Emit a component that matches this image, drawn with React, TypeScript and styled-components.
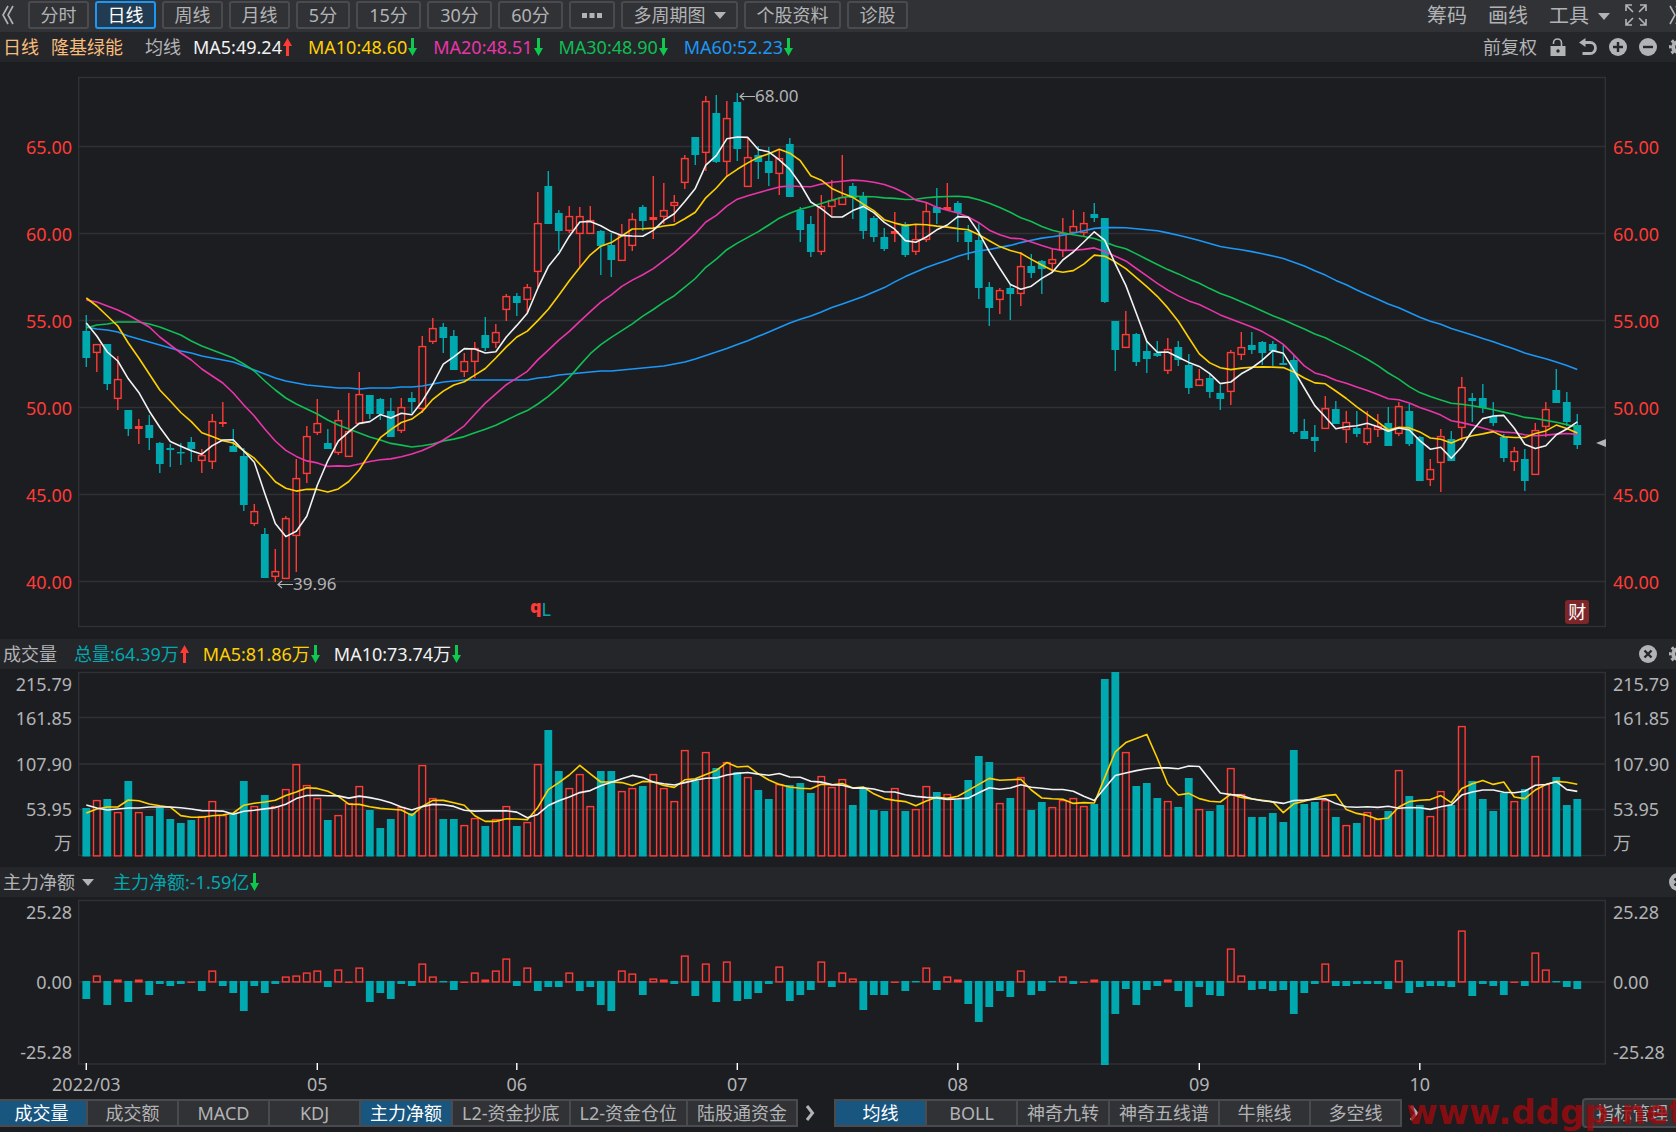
import React from "react";
import styled, { createGlobalStyle, css } from "styled-components";

const color = {
  bg: "#1c1d21",
  bar: "#25262a",
  toolbar: "#313236",
  line: "#303136",
  edge: "#4a4b4f",
  text: "#b2b3b5",
  bright: "#ffffff",
  red: "#ff3b36",
  teal: "#00a8b0",
  green: "#0fc94f",
  yellow: "#ffd000",
  pink: "#e935a9",
  jade: "#10be54",
  blue: "#1b97f5",
  orange: "#f8bc7c",
};

const GlobalStyle = createGlobalStyle`
  * { box-sizing: border-box; }
  body {
    margin: 0;
    overflow: hidden;
    background: ${color.bg};
    color: ${color.text};
    font-family: "Noto Sans", "Noto Sans CJK SC", sans-serif;
    font-size: 18px;
    line-height: 24px;
  }
  button, select {
    margin: 0;
    padding: 0;
    border: 0;
    background: none;
    color: inherit;
    font: inherit;
    white-space: nowrap;
    cursor: pointer;
  }
  svg { display: block; flex: none; }
`;

/* ---------- data ---------- */

// One row per trading day: [rising, high, body top, body bottom, low] on the price canvas.
type Candle = [number, number, number, number, number];
const candles: Candle[] = [
  [0, 315, 331, 358, 367], [1, 344, 344, 353, 372], [0, 344, 344, 384, 390], [1, 356, 379, 399, 410],
  [0, 410, 410, 429, 436], [1, 419, 426, 429, 444], [0, 415, 425, 438, 450], [0, 442, 443, 464, 473],
  [0, 444, 448, 450, 467], [0, 443, 452, 453, 465], [0, 437, 442, 449, 462], [1, 449, 455, 461, 473],
  [1, 414, 421, 462, 469], [1, 402, 422, 424, 427], [0, 429, 446, 452, 452], [0, 448, 456, 505, 511],
  [1, 504, 511, 524, 526], [0, 528, 534, 578, 578], [1, 549, 571, 577, 582], [1, 516, 518, 579, 579],
  [1, 459, 478, 536, 572], [1, 426, 436, 474, 483], [1, 399, 423, 433, 435], [0, 429, 443, 449, 449],
  [1, 410, 420, 453, 455], [1, 393, 431, 457, 457], [1, 372, 394, 424, 424], [0, 395, 395, 414, 419],
  [0, 398, 399, 414, 420], [0, 398, 411, 437, 437], [1, 398, 407, 431, 433], [0, 392, 398, 402, 413],
  [1, 336, 346, 409, 413], [1, 318, 328, 342, 344], [0, 323, 327, 338, 353], [0, 330, 336, 370, 370],
  [1, 353, 361, 372, 377], [1, 342, 348, 362, 378], [0, 317, 335, 348, 351], [1, 324, 332, 343, 348],
  [1, 294, 296, 310, 321], [0, 293, 296, 303, 316], [1, 284, 287, 300, 313], [1, 192, 223, 272, 287],
  [0, 171, 186, 224, 224], [0, 210, 213, 231, 251], [1, 206, 216, 231, 233], [1, 207, 216, 234, 267],
  [1, 206, 220, 234, 234], [0, 230, 231, 246, 275], [0, 233, 245, 260, 277], [1, 224, 235, 261, 261],
  [1, 213, 219, 246, 251], [0, 205, 207, 221, 231], [1, 176, 217, 220, 239], [1, 183, 210, 217, 224],
  [1, 195, 202, 206, 222], [1, 155, 158, 183, 189], [0, 137, 137, 155, 165], [1, 96, 101, 153, 171],
  [0, 95, 113, 162, 163], [1, 101, 118, 162, 177], [0, 93, 102, 149, 161], [1, 137, 157, 187, 187],
  [0, 146, 155, 162, 179], [0, 147, 161, 173, 186], [1, 150, 158, 174, 195], [0, 138, 144, 197, 197],
  [0, 207, 210, 230, 242], [0, 216, 224, 252, 257], [1, 195, 206, 252, 255], [1, 180, 200, 207, 217],
  [1, 155, 197, 205, 205], [0, 183, 186, 198, 219], [0, 192, 197, 231, 239], [0, 216, 218, 237, 242],
  [0, 228, 237, 249, 251], [1, 212, 231, 234, 242], [0, 222, 224, 255, 257], [1, 225, 239, 252, 255],
  [1, 203, 211, 240, 242], [0, 188, 207, 213, 224], [1, 183, 207, 210, 211], [0, 201, 203, 213, 242],
  [0, 225, 231, 242, 260], [0, 223, 240, 288, 299], [0, 282, 287, 308, 326], [1, 288, 290, 300, 314],
  [0, 285, 288, 294, 320], [1, 252, 266, 294, 306], [0, 254, 266, 273, 278], [0, 260, 261, 269, 294],
  [1, 249, 259, 264, 272], [1, 218, 233, 251, 257], [1, 210, 226, 233, 234], [1, 212, 223, 233, 237],
  [0, 203, 214, 218, 222], [0, 218, 218, 302, 303], [0, 321, 321, 350, 371], [1, 311, 334, 348, 348],
  [0, 333, 334, 362, 366], [0, 341, 351, 359, 373], [0, 341, 353, 356, 357], [1, 338, 349, 371, 374],
  [0, 341, 347, 360, 366], [0, 354, 365, 388, 394], [1, 369, 379, 386, 386], [0, 374, 378, 392, 398],
  [0, 385, 393, 399, 410], [1, 350, 352, 392, 405], [1, 332, 347, 355, 360], [0, 332, 345, 350, 354],
  [0, 341, 342, 353, 365], [0, 341, 344, 351, 366], [0, 345, 363, 365, 365], [0, 355, 360, 432, 434],
  [0, 419, 431, 439, 439], [0, 425, 437, 441, 452], [1, 396, 408, 429, 429], [0, 401, 409, 424, 424],
  [1, 411, 422, 430, 443], [0, 411, 428, 434, 437], [1, 411, 428, 443, 445], [1, 414, 426, 430, 437],
  [0, 407, 423, 446, 446], [1, 402, 406, 434, 436], [0, 404, 411, 444, 446], [0, 436, 437, 481, 481],
  [1, 459, 469, 480, 486], [1, 429, 436, 463, 492], [0, 431, 439, 461, 461], [1, 377, 387, 428, 441],
  [0, 393, 398, 401, 422], [0, 384, 398, 408, 413], [0, 402, 416, 423, 426], [0, 434, 437, 458, 462],
  [1, 447, 451, 462, 471], [0, 449, 459, 481, 491], [1, 423, 430, 475, 475], [1, 402, 409, 427, 437],
  [0, 369, 390, 403, 403], [0, 392, 402, 422, 426], [0, 414, 425, 445, 449],
];

// Tops of the volume bars.
const volumes = [
  808, 800, 799, 812, 781, 812, 816, 808, 819, 823, 820, 816, 801, 815, 813, 781, 806, 795, 806, 789, 764, 785,
  798, 820, 815, 803, 786, 810, 828, 819, 807, 813, 765, 798, 819, 819, 825, 818, 826, 819, 806, 826, 822, 764,
  730, 771, 788, 774, 806, 771, 771, 791, 788, 786, 774, 788, 801, 750, 781, 752, 768, 762, 772, 777, 790, 799,
  784, 785, 783, 793, 776, 787, 779, 805, 788, 810, 811, 788, 811, 809, 786, 792, 794, 800, 780, 756, 762, 803,
  798, 777, 810, 802, 807, 800, 798, 806, 804, 679, 672, 752, 786, 783, 798, 801, 807, 778, 809, 811, 805, 768,
  794, 817, 817, 813, 822, 750, 804, 802, 800, 817, 825, 823, 812, 819, 811, 770, 796, 805, 816, 791, 805, 726,
  781, 799, 811, 793, 801, 789, 756, 784, 777, 805, 799,
];

// Net inflow of large orders, signed bar lengths.
const flows = [
  -18, 7, -24, 3, -21, 3, -14, -3, -5, -3, 1, -10, 12, -5, -12, -30, -5, -12, -3, 6, 7, 10, 12, -6, 13, 1, 15,
  -21, -12, -18, -3, -5, 19, 6, -1, -9, 1, 10, 3, 12, 24, -5, 15, -10, -6, -6, 10, -10, -6, -24, -30, 12, 9,
  -14, 4, 3, -3, 27, -15, 19, -21, 21, -20, -18, -12, -3, 16, -20, -14, -9, 21, -6, 10, 4, -29, -14, -14, 1,
  -10, -1, 15, -9, 6, 3, -23, -41, -26, -10, -16, 12, -14, -10, -1, 6, -3, 1, 3, -84, -33, -8, -24, -9, -5, 3,
  -10, -26, -6, -14, -15, 34, 7, -9, -8, -10, -9, -33, -12, -3, 19, -5, -5, -3, -3, -3, -8, 22, -12, -6, -5,
  -5, -6, 52, -15, -3, -5, -14, 1, -5, 30, 13, -1, -6, -8,
];

// Averages for the first days, whose windows start before the visible range.
const lead = {
  ma5: [323, 336, 352, 361],
  ma10: [298, 306, 316, 326, 343, 358, 374, 390, 401],
  ma20: [300, 302, 306, 310, 315, 321, 327, 337, 345, 353, 360, 369, 376, 383, 393, 405, 416, 429, 441],
  ma30: [
    328, 325, 324, 322, 322, 322, 324, 327, 331, 335, 341, 346, 350, 354, 358, 364, 371, 381, 390, 398, 404, 409,
    414, 420, 425, 429, 433, 437, 440,
  ],
  ma60: [
    327, 329, 330, 332, 336, 339, 342, 345, 348, 351, 353, 356, 358, 360, 362, 366, 370, 374, 378, 381, 383, 385,
    386, 387, 388, 388, 389, 388, 388, 388, 387, 387, 386, 384, 382, 381, 380, 380, 380, 380, 380, 380, 380, 378,
    377, 375, 374, 373, 372, 371, 371, 370, 369, 368, 367, 366, 364, 362, 359,
  ],
  vol5: [813, 809, 807, 807],
  vol10: [805, 808, 810, 809, 808, 808, 807, 807, 807],
};

const LEFT = 78;
const WIDTH = 1528;
const STEP = 10.5;
const xOf = (i: number) => 86.3 + i * STEP;
const percent = (x: number) => `${((x - LEFT) / WIDTH) * 100}%`;

const closes = candles.map(([up, , top, bottom]) => (up ? top : bottom));

function average(values: number[], span: number, head: number[]) {
  return values.map((_, i) => {
    if (i < span - 1) return head[i];
    let sum = 0;
    for (let k = i - span + 1; k <= i; k++) sum += values[k];
    return sum / span;
  });
}

const priceLines = [
  { stroke: color.blue, points: average(closes, 60, lead.ma60) },
  { stroke: color.jade, points: average(closes, 30, lead.ma30) },
  { stroke: color.pink, points: average(closes, 20, lead.ma20) },
  { stroke: color.yellow, points: average(closes, 10, lead.ma10) },
  { stroke: "#f2f2f2", points: average(closes, 5, lead.ma5) },
];
const volumeLines = [
  { stroke: color.yellow, points: average(volumes, 5, lead.vol5) },
  { stroke: "#f2f2f2", points: average(volumes, 10, lead.vol10) },
];

const months = [
  { label: "2022/03", day: 0 },
  { label: "05", day: 22 },
  { label: "06", day: 41 },
  { label: "07", day: 62 },
  { label: "08", day: 83 },
  { label: "09", day: 106 },
  { label: "10", day: 127 },
];

/* ---------- layout ---------- */

const Page = styled.div`
  display: flex;
  flex-direction: column;
  min-height: 100vh;
  overflow: hidden;
`;

const Toolbar = styled.header`
  display: flex;
  align-items: center;
  height: 32px;
  padding-bottom: 2px;
  background: ${color.toolbar};
`;

const Periods = styled.nav`
  display: flex;
  gap: 6px;
`;

const CollapseButton = styled.button`
  width: 28px;
  padding-left: 2px;
`;

const PeriodButton = styled.button<{ $active?: boolean; $width: number }>`
  display: flex;
  align-items: center;
  justify-content: center;
  gap: 8px;
  width: ${(p) => p.$width}px;
  height: 28px;
  border: 2px solid ${color.edge};
  border-radius: 3px;
  ${(p) =>
    p.$active &&
    css`
      border-color: ${color.blue};
      background: #213c52;
      color: ${color.bright};
    `}
`;

const Tools = styled.div`
  display: flex;
  align-items: center;
  gap: 15px;
  margin-left: auto;
  margin-right: -11px;
`;

const ToolMenu = styled.div`
  display: flex;
  gap: 21px;
`;

const ToolIcons = styled.div`
  display: flex;
  align-items: center;
  gap: 22px;
`;

const ToolButton = styled.button`
  display: flex;
  align-items: center;
  gap: 9px;
  height: 30px;
  padding-top: 2px;
  font-size: 20px;
`;

const InfoBar = styled.div`
  display: flex;
  align-items: center;
  height: 30px;
  padding-left: 3px;
  background: ${color.bar};
`;

const Legend = styled.div<{ $gap: number }>`
  display: flex;
  align-items: center;
  gap: ${(p) => p.$gap}px;
`;

const Label = styled.span<{ $tone?: string; $gap?: number }>`
  display: flex;
  align-items: center;
  gap: 1px;
  margin-right: ${(p) => p.$gap ?? 0}px;
  color: ${(p) => p.$tone ?? color.text};
  white-space: nowrap;
`;

const IconRow = styled.div`
  display: flex;
  align-items: center;
  gap: 12px;
  margin-left: auto;
  margin-right: -11px;
`;

const Picker = styled.label`
  display: flex;
  align-items: center;
  gap: 7px;
  margin-right: 19px;

  select {
    appearance: none;
    outline: 0;
  }
  option {
    background: ${color.bar};
  }
`;

const Panel = styled.section`
  display: grid;
  grid-template-columns: 78px minmax(0, 1fr) 70px;
`;

const Axis = styled.div<{ $rows: string; $top?: number; $side: "left" | "right"; $tone?: string }>`
  display: grid;
  grid-template-rows: ${(p) => p.$rows};
  align-content: start;
  align-items: center;
  justify-items: ${(p) => (p.$side === "left" ? "end" : "start")};
  padding: ${(p) => p.$top ?? 0}px ${(p) => (p.$side === "left" ? "6px" : "0")} 0
    ${(p) => (p.$side === "left" ? "0" : "7px")};
  color: ${(p) => p.$tone ?? color.text};
`;

const Plot = styled.div`
  position: relative;
`;

const Canvas = styled.svg<{ $height: number }>`
  width: 100%;
  height: ${(p) => p.$height}px;
`;

const Note = styled.span`
  position: absolute;
  display: flex;
  align-items: center;
  font-size: 17px;
  line-height: 20px;
`;

const NewsMark = styled.span`
  position: absolute;
  top: 534px;
  display: flex;
  font-size: 18px;
  font-weight: 700;
  line-height: 20px;

  b {
    color: ${color.red};
  }
  i {
    padding-top: 3px;
    color: ${color.teal};
    font-style: normal;
    font-weight: 400;
  }
`;

const ReportBadge = styled.button`
  position: absolute;
  top: 538px;
  width: 24px;
  height: 24px;
  border-radius: 3px;
  background: #7e2529;
  color: ${color.bright};
  line-height: 24px;
  transform: translateX(-50%);
`;

const DateAxis = styled.div`
  position: relative;
  height: 29px;
  margin: 0 70px 0 78px;
`;

const DateLabel = styled.time`
  position: absolute;
  top: 2px;
  transform: translateX(-50%);
`;

const Footer = styled.footer`
  position: relative;
  display: flex;
  align-items: center;
  height: 28px;
`;

const TabGroup = styled.nav<{ $bleed?: boolean }>`
  display: flex;
  flex: none;
  height: 28px;
  margin-left: ${(p) => (p.$bleed ? "-5px" : "0")};
  border: 2px solid ${color.edge};
`;

const Tab = styled.button<{ $active?: boolean }>`
  min-width: 91px;
  padding: 0 9px;
  border-right: 2px solid ${color.edge};
  background: ${(p) => (p.$active ? "#18557f" : color.toolbar)};
  color: ${(p) => (p.$active ? color.bright : color.text)};

  &:last-child {
    min-width: 89px;
    border-right: 0;
  }
`;

const MoreButton = styled.button`
  flex: none;
  width: 36px;
  padding-left: 7px;
`;

const ManageButton = styled.button`
  flex: none;
  height: 30px;
  margin-left: auto;
  margin-right: -6px;
  padding: 0 12px;
  border: 2px solid ${color.edge};
  border-radius: 4px;
  background: ${color.toolbar};
`;

const Watermark = styled.span`
  position: absolute;
  right: -9px;
  top: -6px;
  color: rgba(155, 10, 14, 0.82);
  font-family: "DejaVu Sans", sans-serif;
  font-size: 34px;
  font-weight: 700;
  line-height: 38px;
  pointer-events: none;
`;

/* ---------- icons ---------- */

const Caret = () => (
  <svg width="12" height="7" viewBox="0 0 12 7" fill={color.text}>
    <path d="M0 0H12L6 7Z" />
  </svg>
);

const Trend = ({ up }: { up?: boolean }) => (
  <svg width="9" height="18" viewBox="0 0 9 18" fill={up ? color.red : color.green}>
    <path d={up ? "M4.5 0L9 8H6V18H3V8H0Z" : "M4.5 18L9 10H6V0H3V10H0Z"} />
  </svg>
);

const Chevrons = ({ flip }: { flip?: boolean }) => (
  <svg width="18" height="20" viewBox="0 0 18 20" fill="none" stroke={color.text} strokeWidth="1.6">
    <path d={flip ? "M1 1L6 10L1 19M7 1L12 10L7 19" : "M6 1L1 10L6 19M11 1L6 10L11 19"} />
  </svg>
);

const More = () => (
  <svg width="10" height="16" viewBox="0 0 10 16" fill="none" stroke={color.text} strokeWidth="3">
    <path d="M2 1L7.500 8L2 15" />
  </svg>
);

const Expand = () => (
  <svg width="22" height="22" viewBox="0 0 22 22" fill="none" stroke={color.text} strokeWidth="1.6">
    <path d="M1 7V1H7M1 1L8 8M15 1H21V7M21 1L14 8M21 15V21H15M21 21L14 14M7 21H1V15M1 21L8 14" />
  </svg>
);

const Lock = () => (
  <svg width="18" height="18" viewBox="0 0 18 18">
    <path d="M12.500 9V5a4 4 0 0 0-8 0v1" fill="none" stroke={color.text} strokeWidth="1.6" />
    <rect x="1.500" y="8" width="15" height="10" fill={color.text} />
    <circle cx="9" cy="13" r="1.700" fill={color.bar} />
  </svg>
);

const Undo = () => (
  <svg width="18" height="18" viewBox="0 0 18 18">
    <path d="M5 4.500H11a5.500 5.500 0 0 1 0 11H3.500" fill="none" stroke={color.text} strokeWidth="2.800" />
    <path d="M0 4.500L6.500 0V9Z" fill={color.text} />
  </svg>
);

const Disc = ({ mark }: { mark: string }) => (
  <svg width="18" height="18" viewBox="0 0 18 18">
    <circle cx="9" cy="9" r="9" fill={color.text} />
    <path d={mark} stroke={color.bar} strokeWidth="2.400" />
  </svg>
);

const Gear = () => (
  <svg width="18" height="18" viewBox="0 0 18 18" fill="none" stroke={color.text}>
    <circle cx="9" cy="9" r="4.800" strokeWidth="4" />
    <circle cx="9" cy="9" r="7.600" strokeWidth="2.800" strokeDasharray="3 2.970" strokeDashoffset="1.500" />
  </svg>
);

const BackArrow = () => (
  <svg width="16" height="9" viewBox="0 0 16 9" fill="none" stroke={color.text} strokeWidth="1.200">
    <path d="M16 4.500H1M5 1L1 4.500L5 8" />
  </svg>
);

const CROSS = "M5.5 5.5L12.5 12.5M12.5 5.5L5.5 12.5";

/* ---------- charts ---------- */

const Curves = ({ lines }: { lines: { stroke: string; points: number[] }[] }) => (
  <g fill="none" strokeWidth="1.600" strokeLinejoin="round">
    {lines.map((line, n) => (
      <polyline
        key={n}
        stroke={line.stroke}
        points={line.points.map((y, i) => `${xOf(i)},${y.toFixed(1)}`).join(" ")}
      />
    ))}
  </g>
);

const Bar = ({ x, top, bottom, up }: { x: number; top: number; bottom: number; up: boolean }) => {
  const height = Math.max(bottom - top, 1.4);
  return up && height > 3 ? (
    <rect x={x - 3.3} y={top + 0.6} width={6.6} height={height - 1.2} fill="none" stroke={color.red} strokeWidth="1.400" />
  ) : (
    <rect x={x - 3.9} y={top} width={7.8} height={height} fill={up ? color.red : color.teal} />
  );
};

const Frame = ({ top, bottom, grid }: { top: number; bottom: number; grid: number[] }) => (
  <g fill="none" stroke={color.line} strokeWidth="1.400">
    <rect x={LEFT + 0.7} y={top} width={WIDTH - 1.4} height={bottom - top} />
    {grid.map((y) => (
      <path key={y} d={`M${LEFT} ${y}H${LEFT + WIDTH}`} />
    ))}
  </g>
);

const PriceChart = () => (
  <Canvas $height={577} viewBox="78 62 1528 577" preserveAspectRatio="none" role="img" aria-label="隆基绿能 日线">
    <Frame top={77.5} bottom={626.5} grid={[146.5, 233.5, 320.5, 407.5, 494.5, 581.5]} />
    {candles.map(([up, high, top, bottom, low], i) => {
      const x = xOf(i);
      return (
        <g key={i}>
          <path
            d={`M${x} ${high}V${top}M${x} ${bottom}V${low}`}
            stroke={up ? color.red : color.teal}
            strokeWidth="1.400"
          />
          <Bar x={x} top={top} bottom={bottom} up={up === 1} />
        </g>
      );
    })}
    <Curves lines={priceLines} />
    <path d="M1596 443L1606 439V447Z" fill={color.text} />
  </Canvas>
);

const VolumeChart = () => (
  <Canvas $height={198} viewBox="78 669 1528 198" preserveAspectRatio="none" role="img" aria-label="成交量">
    <Frame top={672.5} bottom={855.5} grid={[717.5, 764, 809.5]} />
    {volumes.map((top, i) => (
      <Bar key={i} x={xOf(i)} top={top} bottom={856.5} up={candles[i][0] === 1} />
    ))}
    <Curves lines={volumeLines} />
  </Canvas>
);

const FlowChart = () => (
  <Canvas $height={173} viewBox="78 897 1528 173" preserveAspectRatio="none" role="img" aria-label="主力净额">
    <Frame top={900.5} bottom={1064} grid={[982]} />
    {flows.map((v, i) => (
      <Bar key={i} x={xOf(i)} top={v > 0 ? 982.5 - v : 981} bottom={v > 0 ? 982.5 : 981 - v} up={v > 0} />
    ))}
    {months.map((m) => (
      <path key={m.label} d={`M${xOf(m.day)} 1063V1070`} stroke={color.bright} strokeWidth="1.400" />
    ))}
  </Canvas>
);

const AxisLabels = ({ items, ...rest }: { items: string[] } & React.ComponentProps<typeof Axis>) => (
  <Axis {...rest}>
    {items.map((t) => (
      <span key={t}>{t}</span>
    ))}
  </Axis>
);

/* ---------- page ---------- */

const periods = [
  { label: "分时", width: 61 },
  { label: "日线", width: 61, active: true },
  { label: "周线", width: 61 },
  { label: "月线", width: 61 },
  { label: "5分", width: 54 },
  { label: "15分", width: 65 },
  { label: "30分", width: 65 },
  { label: "60分", width: 65 },
];

const subTabs = ["成交量", "成交额", "MACD", "KDJ", "主力净额", "L2-资金抄底", "L2-资金仓位", "陆股通资金"];
const mainTabs = ["均线", "BOLL", "神奇九转", "神奇五线谱", "牛熊线", "多空线"];
const activeTabs = ["成交量", "主力净额", "均线"];

const prices = ["65.00", "60.00", "55.00", "50.00", "45.00", "40.00"];
const volumeTicks = ["215.79", "161.85", "107.90", "53.95", "万"];
const flowTicks = ["25.28", "0.00", "-25.28"];
const priceRows = "repeat(6, 87px)";
const volumeRows = "30px 38px 54px 36px 32px";
const flowRows = "30px 110px 30px";

export default function App() {
  return (
    <Page>
      <GlobalStyle />
      <Toolbar>
        <CollapseButton aria-label="收起">
          <Chevrons />
        </CollapseButton>
        <Periods>
          {periods.map((p) => (
            <PeriodButton key={p.label} $width={p.width} $active={p.active}>
              {p.label}
            </PeriodButton>
          ))}
          <PeriodButton $width={46} aria-label="更多周期">
            <svg width="20" height="5" viewBox="0 0 20 5" fill={color.text}>
              <path d="M0 0H5V5H0ZM7.500 0H12.500V5H7.500ZM15 0H20V5H15Z" />
            </svg>
          </PeriodButton>
          <PeriodButton $width={117}>
            多周期图
            <Caret />
          </PeriodButton>
          <PeriodButton $width={97}>个股资料</PeriodButton>
          <PeriodButton $width={61}>诊股</PeriodButton>
        </Periods>
        <Tools>
          <ToolMenu>
            <ToolButton>筹码</ToolButton>
            <ToolButton>画线</ToolButton>
            <ToolButton>
              工具
              <Caret />
            </ToolButton>
          </ToolMenu>
          <ToolIcons>
            <button aria-label="全屏">
              <Expand />
            </button>
            <button aria-label="展开">
              <Chevrons flip />
            </button>
          </ToolIcons>
        </Tools>
      </Toolbar>

      <InfoBar>
        <Label $tone={color.orange} $gap={12}>日线</Label>
        <Label $tone={color.orange} $gap={22}>隆基绿能</Label>
        <Label $gap={12}>均线</Label>
        <Legend $gap={16}>
          <Label $tone="#f2f2f2">MA5:49.24<Trend up /></Label>
          <Label $tone={color.yellow}>MA10:48.60<Trend /></Label>
          <Label $tone={color.pink}>MA20:48.51<Trend /></Label>
          <Label $tone={color.jade}>MA30:48.90<Trend /></Label>
          <Label $tone={color.blue}>MA60:52.23<Trend /></Label>
        </Legend>
        <IconRow>
          <button>前复权</button>
          <button aria-label="锁定"><Lock /></button>
          <button aria-label="撤销"><Undo /></button>
          <button aria-label="放大"><Disc mark="M9 4V14M4 9H14" /></button>
          <button aria-label="缩小"><Disc mark="M4 9H14" /></button>
          <button aria-label="设置"><Gear /></button>
        </IconRow>
      </InfoBar>

      <Panel>
        <AxisLabels $side="left" $rows={priceRows} $top={41} $tone={color.red} items={prices} />
        <Plot>
          <PriceChart />
          <Note style={{ left: percent(739), top: 24 }}>
            <BackArrow />
            68.00
          </Note>
          <Note style={{ left: percent(277), top: 512 }}>
            <BackArrow />
            39.96
          </Note>
          <NewsMark style={{ left: percent(530) }}>
            <b>q</b>
            <i>L</i>
          </NewsMark>
          <ReportBadge style={{ left: percent(xOf(142)) }}>财</ReportBadge>
        </Plot>
        <AxisLabels $side="right" $rows={priceRows} $top={41} $tone={color.red} items={prices} />
      </Panel>

      <InfoBar>
        <Label $gap={17}>成交量</Label>
        <Legend $gap={14}>
          <Label $tone={color.teal}>总量:64.39万<Trend up /></Label>
          <Label $tone={color.yellow}>MA5:81.86万<Trend /></Label>
          <Label $tone="#f2f2f2">MA10:73.74万<Trend /></Label>
        </Legend>
        <IconRow>
          <button aria-label="关闭成交量"><Disc mark={CROSS} /></button>
          <button aria-label="设置成交量"><Gear /></button>
        </IconRow>
      </InfoBar>

      <Panel>
        <AxisLabels $side="left" $rows={volumeRows} items={volumeTicks} />
        <VolumeChart />
        <AxisLabels $side="right" $rows={volumeRows} items={volumeTicks} />
      </Panel>

      <InfoBar>
        <Picker>
          <select aria-label="指标" defaultValue="主力净额">
            <option>主力净额</option>
            <option>成交额</option>
            <option>MACD</option>
          </select>
          <Caret />
        </Picker>
        <Label $tone={color.teal}>主力净额:-1.59亿<Trend /></Label>
        <IconRow>
          <button aria-label="关闭主力净额"><Disc mark={CROSS} /></button>
        </IconRow>
      </InfoBar>

      <Panel>
        <AxisLabels $side="left" $rows={flowRows} items={flowTicks} />
        <FlowChart />
        <AxisLabels $side="right" $rows={flowRows} items={flowTicks} />
      </Panel>

      <DateAxis>
        {months.map((m) => (
          <DateLabel key={m.label} style={{ left: percent(xOf(m.day)) }}>
            {m.label}
          </DateLabel>
        ))}
      </DateAxis>

      <Footer>
        <TabGroup $bleed>
          {subTabs.map((t) => (
            <Tab key={t} $active={activeTabs.includes(t)}>{t}</Tab>
          ))}
        </TabGroup>
        <MoreButton aria-label="更多副图指标"><More /></MoreButton>
        <TabGroup>
          {mainTabs.map((t) => (
            <Tab key={t} $active={activeTabs.includes(t)}>{t}</Tab>
          ))}
        </TabGroup>
        <MoreButton aria-label="更多主图指标"><More /></MoreButton>
        <ManageButton>指标管理</ManageButton>
        <Watermark>www.ddgp.net</Watermark>
      </Footer>
    </Page>
  );
}
